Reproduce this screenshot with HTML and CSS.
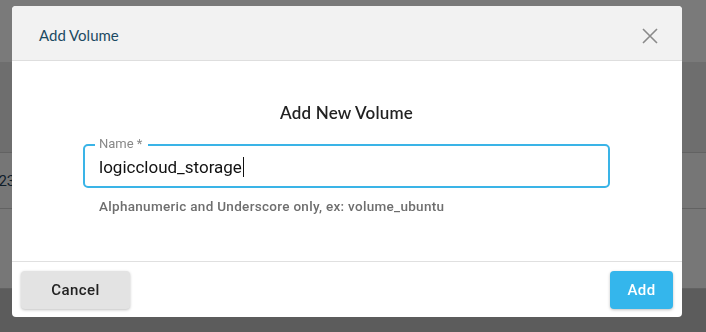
FILE: index.html
```html
<!DOCTYPE html>
<html lang="en">
<head>
  <meta charset="UTF-8">
  <title>Add Volume</title>
  <link rel="stylesheet" href="styles.css">
</head>
<body>
  <div class="page">
    <div class="page-top"></div>
    <div class="page-head"></div>
    <div class="page-row"><span class="cell-num">123</span></div>
    <div class="page-row tall"></div>
    <div class="page-foot"></div>
  </div>

  <div class="backdrop">
    <div class="modal">
      <div class="modal-header">
        <span class="modal-title">Add Volume</span>
        <svg class="close" width="16" height="16" viewBox="0 0 16 16">
          <path d="M1 1 L15 15 M15 1 L1 15" stroke="#8a8a8a" stroke-width="1.6" fill="none"/>
        </svg>
      </div>

      <div class="modal-body">
        <h3>Add New Volume</h3>
        <div class="field">
          <span class="field-label">Name *</span>
          <div class="field-value">logiccloud_storage<span class="caret"></span></div>
        </div>
        <p class="hint">Alphanumeric and Underscore only, ex: volume_ubuntu</p>
      </div>

      <div class="modal-footer">
        <button class="btn btn-cancel">Cancel</button>
        <button class="btn btn-add">Add</button>
      </div>
    </div>
  </div>
</body>
</html>
```

FILE: styles.css
```css
body {
  margin: 0;
  font-family: Roboto, "Liberation Sans", sans-serif;
  background: #fff;
}
.page {
  height: 332px;
  overflow: hidden;
}
.page-top {
  height: 62px;
  background: #f4f4f4;
}
.page-head {
  height: 90px;
  background: #dcdcdc;
  border-bottom: 1px solid #c4c4c4;
}
.page-row {
  height: 55px;
  background: #ececec;
  border-bottom: 1px solid #c4c4c4;
  display: flex;
  align-items: center;
}
.page-row.tall {
  height: 79px;
  background: #eeeeee;
}
.page-foot {
  height: 50px;
  background: #b8b8b8;
}
.cell-num {
  margin-left: -10px;
  font-size: 15px;
  color: #1e3c55;
}
.backdrop {
  position: fixed;
  inset: 0;
  background: rgba(0, 0, 0, 0.5);
}
.modal {
  position: absolute;
  left: 12px;
  top: 6px;
  width: 670px;
  height: 311px;
  background: #fff;
  border-radius: 4px;
  display: flex;
  flex-direction: column;
  overflow: hidden;
}
.modal-header {
  height: 54px;
  background: #f2f2f2;
  border-bottom: 1px solid #dedede;
  display: flex;
  align-items: center;
  justify-content: space-between;
  padding: 0 24px 0 27px;
}
.modal-title {
  font-family: Lato, "Open Sans", sans-serif;
  font-size: 15px;
  color: #1c4a62;
  margin-top: 3px;
}
.close {
  margin-top: 6px;
}
.modal-body {
  height: 200px;
  border-bottom: 1px solid #e0e0e0;
  padding: 0 72px 0 71px;
}
.modal-body h3 {
  margin: 41px 0 21px;
  text-align: center;
  font-family: Lato, "Open Sans", sans-serif;
  font-size: 17px;
  font-weight: 600;
  color: #222;
  letter-spacing: 0.2px;
}
.field {
  position: relative;
  height: 40px;
  border: 2px solid #3ab4e7;
  border-radius: 5px;
  display: flex;
  align-items: center;
  padding: 0 14px;
}
.field-label {
  position: absolute;
  left: 10px;
  top: -9px;
  padding: 0 6px 0 4px;
  background: #fff;
  font-size: 13px;
  color: #888;
  line-height: 14px;
}
.field-value {
  font-size: 17px;
  color: #111;
  margin-top: 2px;
  display: flex;
  align-items: center;
}
.caret {
  width: 1px;
  height: 20px;
  background: #111;
  margin-left: 1px;
}
.hint {
  margin: 10px 0 0 16px;
  font-size: 13.5px;
  font-weight: 500;
  color: #6e6e6e;
  letter-spacing: 0.3px;
}
.modal-footer {
  flex: 1;
  display: flex;
  justify-content: space-between;
  align-items: flex-start;
  padding: 9px 9px 0 9px;
}
.btn {
  height: 38px;
  border: none;
  border-radius: 4px;
  font-family: Roboto, "Liberation Sans", sans-serif;
  font-size: 15px;
  font-weight: 500;
  letter-spacing: 0.4px;
  box-shadow: 0 1px 3px rgba(0, 0, 0, 0.25);
}
.btn-cancel {
  width: 109px;
  background: #e3e3e3;
  color: #222;
}
.btn-add {
  width: 63px;
  background: #34b6ec;
  color: #fff;
}
```
